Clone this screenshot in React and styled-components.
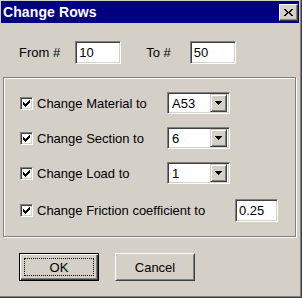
import React from "react";
import styled, { createGlobalStyle } from "styled-components";

const Global = createGlobalStyle`
  html, body { margin: 0; padding: 0; background: #d4d0c8; }
  body { font-family: "Liberation Sans", Arial, sans-serif; font-size: 13px; color: #000; }
  * { box-sizing: border-box; }
`;

const Window = styled.div`
  width: 302px;
  height: 298px;
  background: #d4d0c8;
  padding: 1px 3px 3px 1px;
  box-shadow: inset -1px -1px 0 #404040, inset -2px -2px 0 #808080;
  display: flex;
  flex-direction: column;
`;

const TitleBar = styled.div`
  height: 22px;
  background: #000080;
  display: flex;
  align-items: center;
  justify-content: space-between;
  padding: 0 1px 0 2px;
`;

const Title = styled.span`
  color: #fff;
  font-weight: bold;
  font-size: 14px;
  letter-spacing: 0.1px;
`;

const CloseButton = styled.div`
  width: 19px;
  height: 17px;
  margin-top: 1px;
  background: #d4d0c8;
  border: 1px solid;
  border-color: #fff #404040 #404040 #fff;
  box-shadow: inset -1px -1px 0 #808080;
  display: flex;
  align-items: center;
  justify-content: center;
`;

const Body = styled.div`
  padding: 18px 0 0 2px;
  display: flex;
  flex-direction: column;
`;

const FromRow = styled.div`
  display: flex;
  align-items: center;
  height: 23px;
  padding-left: 16px;
`;

const Label = styled.span`
  white-space: nowrap;
  width: ${(p) => (p.$w ? `${p.$w}px` : "auto")};
  flex: none;
`;

const TextBox = styled.div`
  width: ${(p) => p.$w}px;
  height: 23px;
  background: #fff;
  border: 1px solid;
  border-color: #808080 #fff #fff #808080;
  box-shadow: inset 1px 1px 0 #404040, inset -1px -1px 0 #d4d0c8;
  padding: 0 0 0 3px;
  display: flex;
  align-items: center;
  margin-left: ${(p) => p.$ml || 0}px;
  flex: none;
`;

const Group = styled.div`
  margin-top: 13px;
  width: 293px;
  border: 1px solid #808080;
  box-shadow: 1px 1px 0 #fff, inset 1px 1px 0 #fff;
  padding: 14px 0 14px 16px;
  display: flex;
  flex-direction: column;
  gap: 13px;
`;

const OptionRow = styled.div`
  display: flex;
  align-items: center;
  height: ${(p) => p.$h}px;
  margin-top: ${(p) => p.$mt || 0}px;
`;

const CheckBox = styled.div`
  width: 13px;
  height: 13px;
  background: #fff;
  border: 1px solid;
  border-color: #808080 #fff #fff #808080;
  box-shadow: inset 1px 1px 0 #404040, inset -1px -1px 0 #d4d0c8;
  display: flex;
  align-items: center;
  justify-content: center;
  margin-right: 4px;
  flex: none;
`;

const Combo = styled.div`
  width: 63px;
  height: 22px;
  background: #fff;
  border: 1px solid;
  border-color: #808080 #fff #fff #808080;
  box-shadow: inset 1px 1px 0 #404040, inset -1px -1px 0 #d4d0c8;
  padding: 2px 2px 2px 4px;
  display: flex;
  align-items: center;
  justify-content: space-between;
  flex: none;
`;

const DropButton = styled.div`
  width: 17px;
  height: 18px;
  background: #d4d0c8;
  border: 1px solid;
  border-color: #d4d0c8 #404040 #404040 #d4d0c8;
  box-shadow: inset 1px 1px 0 #fff, inset -1px -1px 0 #808080;
  display: flex;
  align-items: center;
  justify-content: center;
`;

const ButtonRow = styled.div`
  display: flex;
  gap: 16px;
  margin-top: 16px;
  padding-left: 16px;
`;

const Button = styled.div`
  width: 80px;
  height: 28px;
  background: #d4d0c8;
  position: relative;
  display: flex;
  align-items: center;
  justify-content: center;
  border: 1px solid;
  border-color: ${(p) => (p.$default ? "#000" : "#fff #404040 #404040 #fff")};
  box-shadow: ${(p) =>
    p.$default
      ? "inset 1px 1px 0 #fff, inset -1px -1px 0 #404040, inset -2px -2px 0 #808080"
      : "inset 1px 1px 0 #d4d0c8, inset -1px -1px 0 #808080"};
`;

const FocusRing = styled.div`
  position: absolute;
  inset: 4px;
  border: 1px dotted #000;
  pointer-events: none;
`;

const Check = () => (
  <svg width="7" height="7" viewBox="0 0 7 7" shapeRendering="crispEdges">
    <path d="M6 0h1v3h-1v1h-1v1h-1v1h-1v1h-1v-1h-1v-1h-1v-3h1v1h1v1h1v-1h1v-1h1z" fill="#000" />
  </svg>
);

const Arrow = () => (
  <svg width="7" height="4" viewBox="0 0 7 4" shapeRendering="crispEdges">
    <path d="M0 0h7v1h-1v1h-1v1h-1v1h-1v-1h-1v-1h-1v-1h-1z" fill="#000" />
  </svg>
);

const CloseGlyph = () => (
  <svg width="9" height="8" viewBox="0 0 9 8" shapeRendering="crispEdges">
    <path
      d="M0 0h2v1h1v1h1v1h1v-1h1v-1h1v-1h2v1h-1v1h-1v1h-1v1h1v1h1v1h1v1h-2v-1h-1v-1h-1v-1h-1v1h-1v1h-1v1h-2v-1h1v-1h1v-1h1v-1h-1v-1h-1v-1h-1z"
      fill="#000"
    />
  </svg>
);

const options = [
  { label: "Change Material to", value: "A53" },
  { label: "Change Section to", value: "6" },
  { label: "Change Load to", value: "1" },
];

export default function App() {
  return (
    <>
      <Global />
      <Window>
        <TitleBar>
          <Title>Change Rows</Title>
          <CloseButton>
            <CloseGlyph />
          </CloseButton>
        </TitleBar>
        <Body>
          <FromRow>
            <Label>From #</Label>
            <TextBox $w={46} $ml={15}>10</TextBox>
            <Label style={{ marginLeft: 25 }}>To #</Label>
            <TextBox $w={46} $ml={19}>50</TextBox>
          </FromRow>
          <Group>
            {options.map((o) => (
              <OptionRow key={o.label} $h={22}>
                <CheckBox>
                  <Check />
                </CheckBox>
                <Label $w={130}>{o.label}</Label>
                <Combo>
                  <span>{o.value}</span>
                  <DropButton>
                    <Arrow />
                  </DropButton>
                </Combo>
              </OptionRow>
            ))}
            <OptionRow $h={23} $mt={2}>
              <CheckBox>
                <Check />
              </CheckBox>
              <Label $w={198}>Change Friction coefficient to</Label>
              <TextBox $w={43}>0.25</TextBox>
            </OptionRow>
          </Group>
          <ButtonRow>
            <Button $default>
              OK
              <FocusRing />
            </Button>
            <Button>Cancel</Button>
          </ButtonRow>
        </Body>
      </Window>
    </>
  );
}
